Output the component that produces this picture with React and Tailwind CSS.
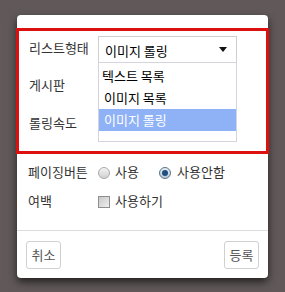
export default function App() {
  const font = { fontFamily: '"Noto Sans CJK KR", "Noto Sans", sans-serif' }
  return (
    <div className="w-[285px] h-[292px] bg-[#615959] pt-[15px] pl-[17px] text-[13px] text-[#333]" style={font}>
      <div className="w-[251px] h-[263px] bg-white rounded-[4px] pt-[13px] shadow-[0_4px_8px_rgba(0,0,0,0.65)] flex flex-col">
        {/* red annotation box */}
        <div className="-mx-px border-[3px] border-[#dd1010] pt-[5px] pb-px pl-[10px]">
          <div className="h-[38px] flex items-start">
            <span className="w-[69px] pt-[2px] leading-[19px]">리스트형태</span>
            <div className="relative">
              <div className="w-[139px] h-[27px] border border-[#cfcfcf] flex items-center justify-between pl-[6px] pr-[9px] text-black">
                <span className="leading-[19px] mt-[2px]">이미지 롤링</span>
                <svg width="8" height="5" viewBox="0 0 8 5"><path d="M0 0h8L4 5z" fill="#111" /></svg>
              </div>
              <div className="absolute left-0 top-[26px] w-[139px] h-[80px] border border-[#d4d4e0] bg-white pt-[2px] text-black">
                <div className="h-[22px] pl-[3px] leading-[22px]">텍스트 목록</div>
                <div className="h-[22px] pl-[5px] leading-[22px]">이미지 목록</div>
                <div className="h-[22px] pl-[5px] leading-[22px] bg-[#8fb2f7] text-white">이미지 롤링</div>
              </div>
            </div>
          </div>
          <div className="h-[38px] flex items-start">
            <span className="w-[69px] pt-[1px] leading-[19px]">게시판</span>
          </div>
          <div className="h-[38px] flex items-start">
            <span className="w-[69px] pt-[1px] leading-[19px]">롤링속도</span>
          </div>
        </div>

        <div className="mt-[4px] pl-[11px]">
          <div className="h-[29px] flex items-center">
            <span className="w-[70px] leading-[19px] -mt-[2px]">페이징버튼</span>
            <span className="w-[12px] h-[12px] rounded-full border border-[#a9a9a9] bg-gradient-to-b from-[#f4f4f4] to-[#d0d0d0]"></span>
            <span className="ml-[5px] w-[44px] -mt-[2px]">사용</span>
            <span className="w-[12px] h-[12px] rounded-full border border-[#5d7189] bg-gradient-to-b from-[#e8eef4] to-[#b8c6d4] flex items-center justify-center">
              <span className="w-[6px] h-[6px] rounded-full bg-[#1f4f80]"></span>
            </span>
            <span className="ml-[6px] -mt-[2px]">사용안함</span>
          </div>
          <div className="h-[29px] flex items-center">
            <span className="w-[70px] leading-[19px] -mt-[2px]">여백</span>
            <span className="w-[12px] h-[12px] border border-[#8e8e8e] bg-gradient-to-br from-[#c8c8c8] to-[#efefef]"></span>
            <span className="ml-[5px] -mt-[2px]">사용하기</span>
          </div>
        </div>

        <div className="mt-[14px] border-t border-[#dddddd]"></div>

        <div className="mt-[10px] px-[9px] flex justify-between">
          <button className="w-[35px] h-[28px] border border-[#d0d0d0] rounded-[3px] text-[#555] leading-[19px] pb-[1px]">취소</button>
          <button className="w-[35px] h-[28px] border border-[#d0d0d0] rounded-[3px] text-[#555] leading-[19px] pb-[1px]">등록</button>
        </div>
      </div>
    </div>
  )
}
